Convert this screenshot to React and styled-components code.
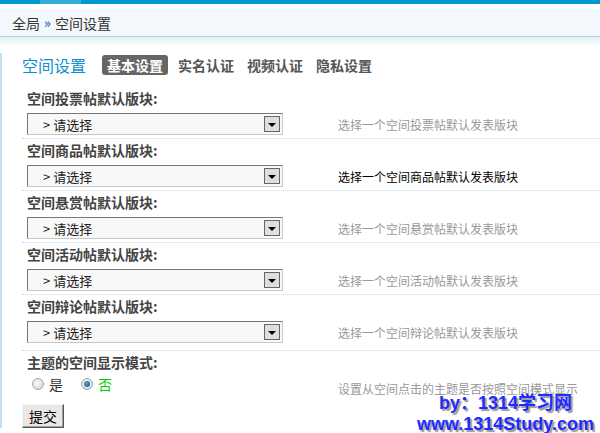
import React, { useState } from "react"
import styled, { createGlobalStyle } from "styled-components"

const GlobalStyle = createGlobalStyle`
  html, body {
    margin: 0;
    padding: 0;
    background: #fff;
  }
  body {
    font-family: "Noto Sans CJK SC", "DejaVu Sans", sans-serif;
    font-size: 14px;
    color: #333;
  }
`

const Page = styled.div`
  position: relative;
  width: 600px;
  height: 433px;
  overflow: hidden;
  background: #fff;
`

const TopBar = styled.div`
  height: 4px;
  background: #0099cc;
  display: flex;
  &::before {
    content: "";
    width: 40px;
  }
  &::after {
    content: "";
    width: 41px;
    background: #33aed9;
  }
`

const Crumbs = styled.div`
  margin-top: 5px;
  height: 27px;
  background: #f2f8fc;
  border-bottom: 1px solid #a9cfd9;
  display: flex;
  align-items: center;
  padding-left: 12px;
  gap: 4px;
  font-size: 14px;
  color: #333;
`

const Raquo = styled.span`
  color: #3a6fb8;
  font-size: 13px;
  font-weight: bold;
`

const Shade = styled.div`
  height: 9px;
  background: linear-gradient(#e3eff6, #fff);
`

const Body = styled.div`
  border-left: 2px solid #c3dff0;
  padding-left: 20px;
`

const Head = styled.div`
  display: flex;
  align-items: center;
  height: 24px;
  margin-top: 7px;
  margin-bottom: 10px;
`

const Title = styled.div`
  color: #0f8fd0;
  font-size: 16px;
  width: 80px;
`

const Tabs = styled.div`
  display: flex;
  gap: 13px;
`

const Tab = styled.div`
  font-size: 14px;
  font-weight: bold;
  color: ${({ active }) => (active ? "#fff" : "#555")};
  background: ${({ active }) => (active ? "#666" : "transparent")};
  border-radius: 3px;
  padding: 0 ${({ active }) => (active ? "5px" : "0")};
  margin-right: ${({ active }) => (active ? "-3px" : "0")};
  line-height: 20px;
`

const Row = styled.div`
  padding: 2px 0 ${({ tail }) => (tail ? "7px" : "3px")} 5px;
  border-bottom: ${({ last }) => (last ? "none" : "1px dotted #c4dcef")};
`

const Label = styled.div`
  font-weight: bold;
  color: #444;
  line-height: 18px;
  font-size: 14px;
`

const Line = styled.div`
  display: flex;
  align-items: center;
  margin-top: 6px;
  height: 22px;
`

const Select = styled.div`
  box-sizing: border-box;
  width: 256px;
  height: 22px;
  border: 1px solid #777;
  border-right-color: #c8c8c8;
  border-bottom-color: #c8c8c8;
  background: #f8f8f8;
  display: flex;
  align-items: center;
  padding-left: 15px;
  font-size: 13px;
  color: #222;
`

const SelectText = styled.span`
  flex: 1;
`

const Arrow = styled.span`
  box-sizing: border-box;
  width: 16px;
  height: 16px;
  margin-right: 2px;
  border: 1px solid #666;
  background: #dedede;
  display: flex;
  align-items: center;
  justify-content: center;
  &::after {
    content: "";
    border-left: 4px solid transparent;
    border-right: 4px solid transparent;
    border-top: 4px solid #000;
    margin-top: 1px;
  }
`

const Hint = styled.span`
  margin-left: 55px;
  font-size: 12px;
  white-space: nowrap;
  color: ${({ dark }) => (dark ? "#000" : "#999")};
`

const Radios = styled.div`
  display: flex;
  align-items: center;
  height: 22px;
  margin-top: 2px;
`

const RadioGroup = styled.div`
  display: flex;
  align-items: center;
  width: 311px;
  padding-left: 5px;
  box-sizing: border-box;
`

const Radio = styled.span`
  box-sizing: border-box;
  width: 12px;
  height: 12px;
  border-radius: 50%;
  border: 1px solid #a8a8a8;
  background: radial-gradient(circle at 40% 40%, #fafafa, #d0d0d0);
  display: flex;
  align-items: center;
  justify-content: center;
  cursor: pointer;
  &::after {
    content: "";
    width: 6px;
    height: 6px;
    border-radius: 50%;
    background: ${({ on }) => (on ? "radial-gradient(circle at 40% 40%, #4aa8e8, #0a4f90)" : "transparent")};
  }
`

const RadioText = styled.span`
  margin: 0 18px 0 5px;
  font-size: 14px;
  color: ${({ green }) => (green ? "#00cc00" : "#333")};
`

const ModeHint = styled(Hint)`
  margin-left: 0;
  margin-top: 8px;
`

const Submit = styled.button`
  margin-top: 6px;
  width: 42px;
  height: 24px;
  padding: 0;
  font-family: inherit;
  font-size: 14px;
  color: #000;
  background: #e8e8e8;
  border: 1px solid;
  border-color: #f4f4f4 #555 #555 #f4f4f4;
  box-shadow: inset -1px -1px 0 #a0a0a0;
`

const Mark = styled.div`
  position: absolute;
  right: 6px;
  bottom: -2px;
  text-align: right;
  font-family: "Liberation Sans", Arial, "Noto Sans CJK SC", sans-serif;
  font-weight: bold;
  color: #1f2cff;
  text-shadow: 2px 2px 1px #9a9a9a;
  line-height: 21px;
`

const MarkBy = styled.div`
  font-size: 18px;
  padding-right: 22px;
`

const MarkUrl = styled.div`
  font-size: 18px;
`

const rows = [
  { label: "空间投票帖默认版块:", hint: "选择一个空间投票帖默认发表版块" },
  { label: "空间商品帖默认版块:", hint: "选择一个空间商品帖默认发表版块", dark: true },
  { label: "空间悬赏帖默认版块:", hint: "选择一个空间悬赏帖默认发表版块" },
  { label: "空间活动帖默认版块:", hint: "选择一个空间活动帖默认发表版块" },
  { label: "空间辩论帖默认版块:", hint: "选择一个空间辩论帖默认发表版块" },
]

const tabs = ["基本设置", "实名认证", "视频认证", "隐私设置"]

export default function App() {
  const [mode, setMode] = useState(false)

  return (
    <Page>
      <GlobalStyle />
      <TopBar />
      <Crumbs>
        全局 <Raquo>»</Raquo> 空间设置
      </Crumbs>
      <Shade />
      <Body>
        <Head>
          <Title>空间设置</Title>
          <Tabs>
            {tabs.map((t, i) => (
              <Tab key={t} active={i === 0}>{t}</Tab>
            ))}
          </Tabs>
        </Head>
        {rows.map((r, i) => (
          <Row key={r.label} tail={i === rows.length - 1}>
            <Label>{r.label}</Label>
            <Line>
              <Select>
                <SelectText>&gt; 请选择</SelectText>
                <Arrow />
              </Select>
              <Hint dark={r.dark}>{r.hint}</Hint>
            </Line>
          </Row>
        ))}
        <Row last>
          <Label>主题的空间显示模式:</Label>
          <Radios>
            <RadioGroup>
              <Radio on={mode} onClick={() => setMode(true)} />
              <RadioText>是</RadioText>
              <Radio on={!mode} onClick={() => setMode(false)} />
              <RadioText green>否</RadioText>
            </RadioGroup>
            <ModeHint>设置从空间点击的主题是否按照空间模式显示</ModeHint>
          </Radios>
        </Row>
        <Submit>提交</Submit>
      </Body>
      <Mark>
        <MarkBy>by：1314学习网</MarkBy>
        <MarkUrl>www.1314Study.com</MarkUrl>
      </Mark>
    </Page>
  )
}
